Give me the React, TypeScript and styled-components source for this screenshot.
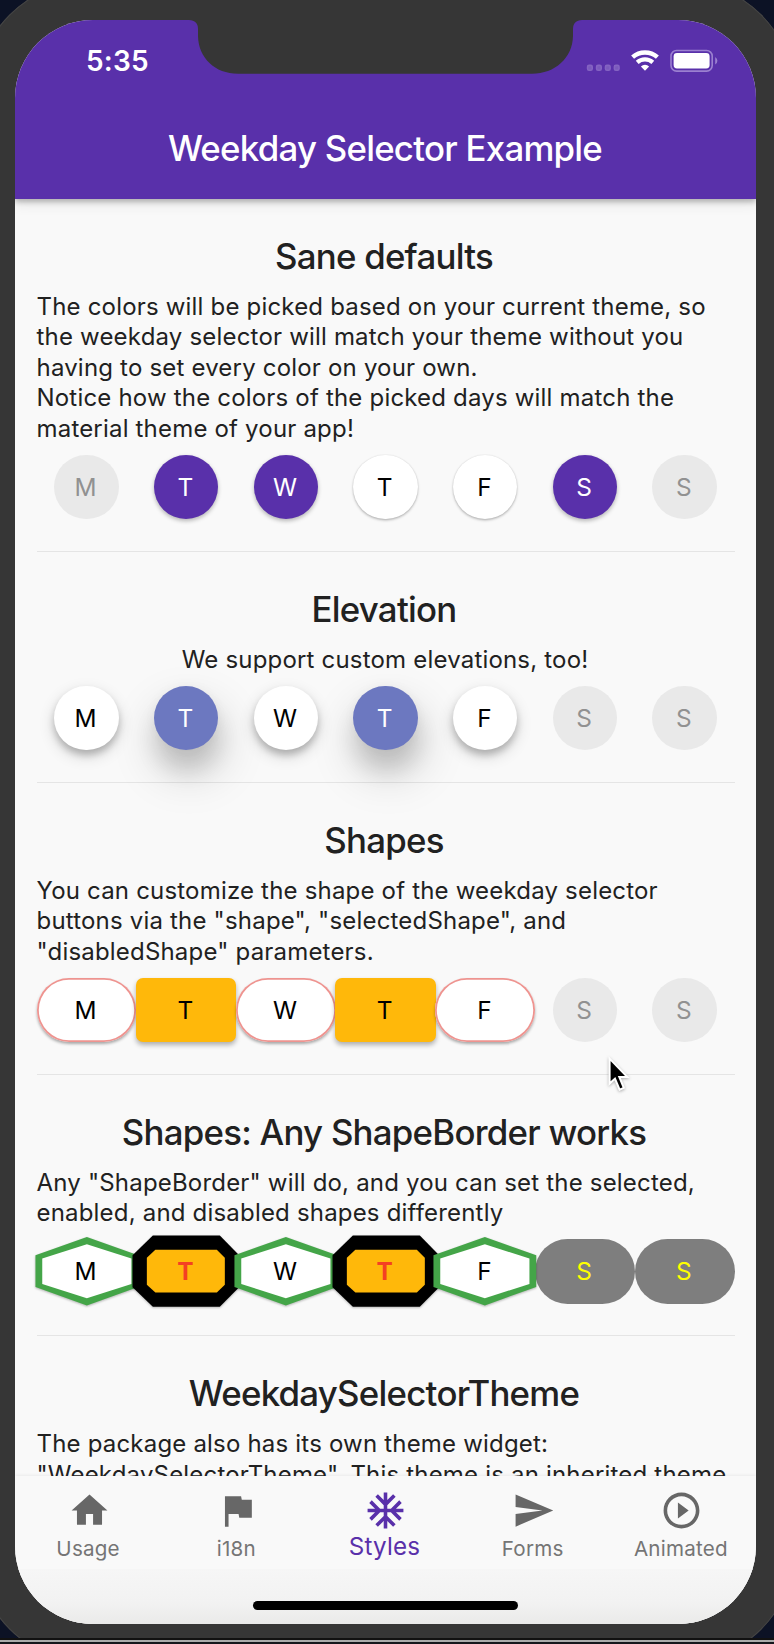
import React from "react";
import styled, { createGlobalStyle, css } from "styled-components";

const PURPLE = "#5930aa";

const GlobalStyle = createGlobalStyle`
  * { box-sizing: border-box; }
  html, body { margin: 0; padding: 0; }
  body {
    width: 774px;
    height: 1644px;
    overflow: hidden;
    background: #0c1225;
    font-family: Inter, "Liberation Sans", sans-serif;
    color: #212121;
  }
`;

const Desktop = styled.div`
  width: 774px;
  height: 1644px;
  display: flex;
  flex-direction: column;
  overflow: hidden;
`;

const Stage = styled.div`
  height: 1638px;
  flex: none;
  overflow: hidden;
`;

const WindowEdge = styled.div`
  height: 6px;
  background: #14161c;
  border-top: 2px solid #111;
  &::before {
    content: "";
    display: block;
    height: 2px;
    background: #ababab;
  }
`;

const Device = styled.div`
  position: relative;
  width: 821px;
  height: 1684px;
  margin: -20px 0 0 -25px;
  padding: 40px;
  border-radius: 118px;
  background: #363636;
  box-shadow: inset 0 0 0 1px #444;
`;

const Screen = styled.div`
  isolation: isolate;
  width: 741px;
  height: 1604px;
  border-radius: 78px;
  overflow: hidden;
  display: flex;
  flex-direction: column;
  background: #f9f9f9;
`;

const Notch = styled.svg`
  position: absolute;
  left: 214px;
  top: 39px;
`;

const AppBar = styled.header`
  position: relative;
  z-index: 2;
  flex: none;
  height: 179px;
  background: ${PURPLE};
  color: #fff;
  display: flex;
  flex-direction: column;
  box-shadow: 0 3px 5px rgba(0, 0, 0, 0.24), 0 6px 12px rgba(0, 0, 0, 0.08);
`;

const StatusBar = styled.div`
  height: 79px;
  display: flex;
  align-items: center;
  justify-content: space-between;
  padding: 2px 38.5px 0 71px;
`;

const Clock = styled.span`
  font-size: 28px;
  line-height: 34px;
  font-weight: 600;
  letter-spacing: 0.2px;
`;

const Indicators = styled.div`
  display: flex;
  align-items: center;
`;

const Title = styled.h1`
  margin: 0;
  padding-right: 1px;
  height: 100px;
  line-height: 99px;
  font-size: 34.8px;
  font-weight: 500;
  text-align: center;
  letter-spacing: -0.74px;
`;

const Content = styled.main`
  flex: 1;
  min-height: 0;
  overflow: hidden;
  padding: 0 21.5px;
`;

const Section = styled.section`
  padding: 35.6px 0 31.6px;
  border-bottom: 1px solid #e5e5e5;
`;

const Heading = styled.h2`
  margin: 0 0 15.3px;
  padding-right: 3px;
  font-size: 34.8px;
  line-height: 42px;
  font-weight: 500;
  text-align: center;
  letter-spacing: -0.74px;
  white-space: nowrap;
`;

const Copy = styled.p<{ $center?: boolean }>`
  margin: 0 0 10.6px;
  padding-right: ${(p) => (p.$center ? 1 : 0)}px;
  font-size: 24px;
  line-height: 30.5px;
  letter-spacing: 0.19px;
  white-space: pre;
  text-align: ${(p) => (p.$center ? "center" : "left")};
`;

const Week = styled.div`
  display: grid;
  grid-template-columns: repeat(7, minmax(0, 1fr));
  height: 64.4px;
`;

const Cell = styled.div`
  display: grid;
  grid-template: 64.4px / minmax(0, 1fr);
  place-items: center;
  & > * { grid-area: 1 / 1; }
`;

type Look =
  | "disabled" | "plain" | "selected" | "raised" | "lifted"
  | "pill" | "block" | "hexagon" | "octagon" | "muted";

const looks: Record<string, ReturnType<typeof css>> = {
  disabled: css`background: #e9e9e9; color: #919191;`,
  plain: css`background: #fff; color: #000; box-shadow: 0 1.5px 2.5px rgba(0,0,0,.25), 0 0 1.5px rgba(0,0,0,.12);`,
  selected: css`background: ${PURPLE}; color: #fff; box-shadow: 0 2px 4px rgba(0,0,0,.28);`,
  raised: css`background: #fff; color: #000; box-shadow: 0 5px 7px rgba(0,0,0,.2), 0 6px 16px rgba(0,0,0,.16);`,
  lifted: css`background: #6c78c0; color: #fff; box-shadow: 1px 20px 22px rgba(0,0,0,.12), 3px 22px 46px 2px rgba(0,0,0,.18), 0 0 12px rgba(0,0,0,.04);`,
  pill: css`width: 100%; background: #fff; color: #000; box-shadow: inset 0 0 0 1.8px #ee9490, 0 2px 3px rgba(0,0,0,.32);`,
  block: css`width: 100.4px; border-radius: 7px; background: #ffb80a; color: #000; box-shadow: 0 3px 5px rgba(0,0,0,.3);`,
  muted: css`width: 100%; background: #7e7e7e; color: #ffff00;`,
};

const DayButton = styled.div<{ $look: Look }>`
  width: 64.4px;
  height: 64.4px;
  border-radius: 33px;
  display: flex;
  align-items: center;
  justify-content: center;
  ${(p) => looks[p.$look]}
`;

const Letter = styled.span<{ $tone?: string; $bold?: boolean }>`
  position: relative;
  font-size: 24.4px;
  line-height: 30px;
  margin: 0 1.5px 1px 0;
  color: ${(p) => p.$tone ?? "inherit"};
  font-weight: ${(p) => (p.$bold ? 700 : 400)};
`;

const Shape = styled.svg`
  overflow: visible;
  filter: drop-shadow(0 1.5px 1.2px rgba(0, 0, 0, 0.28));
`;

const NavBar = styled.nav`
  position: relative;
  z-index: 1;
  flex: none;
  height: 148.5px;
  background: #f9f9f9;
  box-shadow: 0 -1px 3px rgba(0, 0, 0, 0.06);
`;

const Tabs = styled.div`
  display: grid;
  grid-template-columns: repeat(5, 1fr);
  height: 93.5px;
`;

const Tab = styled.div<{ $active?: boolean }>`
  display: flex;
  flex-direction: column;
  align-items: center;
  padding-top: 13.8px;
  color: ${(p) => (p.$active ? PURPLE : "#676767")};
  svg { flex: none; }
`;

const TabLabel = styled.span<{ $active?: boolean }>`
  height: 30px;
  margin-right: 2px;
  line-height: ${(p) => (p.$active ? 29 : 33)}px;
  font-size: ${(p) => (p.$active ? 24.2 : 20.6)}px;
  letter-spacing: ${(p) => (p.$active ? 0.2 : 0.22)}px;
  color: ${(p) => (p.$active ? PURPLE : "#757575")};
`;

const HomeArea = styled.div`
  height: 55px;
  display: flex;
  justify-content: center;
  padding-top: 31.5px;
  background: linear-gradient(#f6f6f6, #f2f2f2 60%, #eaeae9);
`;

const HomeIndicator = styled.div`
  width: 265px;
  height: 9px;
  border-radius: 5px;
  background: #000;
`;

const Pointer = styled.svg`
  position: absolute;
  left: 631px;
  top: 1075px;
  filter: drop-shadow(0 1.5px 1.5px rgba(0, 0, 0, 0.3));
`;

function Day({ look, letter }: { look: Look; letter: string }) {
  if (look === "hexagon") {
    return (
      <Cell>
        <Shape width="99.7" height="64.4" viewBox="-49.85 -32.2 99.7 64.4">
          <path d="M0-34.300 51.400-15.900V15.700L0 34.200-51.400 15.700V-15.900Z" fill="#44a548" />
          <path d="M0-27 44.600-12.600V12.800L0 27-44.600 12.800V-12.600Z" fill="#fff" />
        </Shape>
        <Letter $tone="#000">{letter}</Letter>
      </Cell>
    );
  }
  if (look === "octagon") {
    return (
      <Cell>
        <Shape width="99.7" height="64.4" viewBox="-49.85 -32.2 99.7 64.4">
          <path d="M-33-35.600H34L53.300-16V16L34 35.600H-33L-53.300 16V-16Z" fill="#000" />
          <path d="M-30.500-21.400H31L39-13.500V13.500L31 21.400H-30.500L-39 13.500V-13.500Z" fill="#ffb80a" />
        </Shape>
        <Letter $tone="#f44023" $bold>{letter}</Letter>
      </Cell>
    );
  }
  return (
    <Cell>
      <DayButton $look={look}><Letter>{letter}</Letter></DayButton>
    </Cell>
  );
}

function WeekdayRow({ days }: { days: Look[] }) {
  return (
    <Week>
      {days.map((look, i) => <Day key={i} look={look} letter={"MTWTFSS"[i]} />)}
    </Week>
  );
}

const sections: { title: string; lines: string[]; center?: boolean; days?: Look[] }[] = [
  {
    title: "Sane defaults",
    lines: [
      "The colors will be picked based on your current theme, so",
      "the weekday selector will match your theme without you",
      "having to set every color on your own.",
      "Notice how the colors of the picked days will match the",
      "material theme of your app!",
    ],
    days: ["disabled", "selected", "selected", "plain", "plain", "selected", "disabled"],
  },
  {
    title: "Elevation",
    lines: ["We support custom elevations, too!"],
    center: true,
    days: ["raised", "lifted", "raised", "lifted", "raised", "disabled", "disabled"],
  },
  {
    title: "Shapes",
    lines: [
      "You can customize the shape of the weekday selector",
      'buttons via the "shape", "selectedShape", and',
      '"disabledShape" parameters.',
    ],
    days: ["pill", "block", "pill", "block", "pill", "disabled", "disabled"],
  },
  {
    title: "Shapes: Any ShapeBorder works",
    lines: [
      'Any "ShapeBorder" will do, and you can set the selected,',
      "enabled, and disabled shapes differently",
    ],
    days: ["hexagon", "octagon", "hexagon", "octagon", "hexagon", "muted", "muted"],
  },
  {
    title: "WeekdaySelectorTheme",
    lines: [
      "The package also has its own theme widget:",
      '"WeekdaySelectorTheme". This theme is an inherited theme',
    ],
  },
];

const tabs = [
  { label: "Usage", d: "M10 20v-6h4v6h5v-8h3L12 3 2 12h3v8z" },
  { label: "i18n", d: "M14.4 6L14 4H5v17h2v-7h5.6l.4 2h7V6z" },
  {
    label: "Styles",
    active: true,
    d: "M22 11h-4.17l3.24-3.24-1.41-1.42L15 11h-2V9l4.66-4.66-1.42-1.41L13 6.17V2h-2v4.17L7.76 2.93 6.34 4.34 11 9v2H9L4.34 6.34 2.93 7.76 6.17 11H2v2h4.17l-3.24 3.24 1.41 1.42L9 13h2v2l-4.66 4.66 1.42 1.41L11 17.83V22h2v-4.17l3.24 3.24 1.42-1.41L13 15v-2h2l4.66 4.66 1.41-1.42L17.83 13H22z",
  },
  { label: "Forms", d: "M2.01 21L23 12 2.01 3 2 10l15 2-15 2z" },
  {
    label: "Animated",
    d: "M10 16.5l6-4.5-6-4.5v9zM12 2C6.48 2 2 6.48 2 12s4.48 10 10 10 10-4.48 10-10S17.52 2 12 2zm0 18c-4.41 0-8-3.59-8-8s3.59-8 8-8 8 3.59 8 8-3.59 8-8 8z",
  },
];

function StatusIcons() {
  return (
    <Indicators>
      <svg width="132" height="24" viewBox="0 0 132 24">
        <g fill="#7a5abc" stroke="#8463c2" strokeWidth="1.6">
          {[1.6, 10.6, 19.5, 28.4].map((x) => (
            <rect key={x} x={x} y="16.400" width="4.6" height="4.8" rx="1.4" />
          ))}
        </g>
        <g fill="none" stroke="#fff">
          <path d="M46.600 8.200A18.600 18.600 0 0 1 71.400 8.200" strokeWidth="4.4" />
          <path d="M51.200 13.400A11.600 11.600 0 0 1 66.800 13.400" strokeWidth="4.2" />
        </g>
        <path d="M54.900 17.400A6 6 0 0 1 63.100 17.400L59 21.800Z" fill="#fff" />
        <rect x="85" y="1.500" width="41.2" height="20.6" rx="5.6" fill="none" stroke="#9b80d0" strokeWidth="1.6" />
        <rect x="87.6" y="4.100" width="36" height="15.4" rx="3.4" fill="#fff" />
        <path d="M129.200 8.100Q131.400 9.500 131.400 11.800T129.200 15.500Z" fill="#9b80d0" />
      </svg>
    </Indicators>
  );
}

export default function App() {
  return (
    <Desktop>
      <GlobalStyle />
      <Stage>
        <Device>
          <Screen>
            <AppBar>
              <StatusBar>
                <Clock>5:35</Clock>
                <StatusIcons />
              </StatusBar>
              <Title>Weekday Selector Example</Title>
            </AppBar>
            <Content>
              {sections.map((s) => (
                <Section key={s.title}>
                  <Heading>{s.title}</Heading>
                  <Copy $center={s.center}>{s.lines.join("\n")}</Copy>
                  {s.days && <WeekdayRow days={s.days} />}
                </Section>
              ))}
            </Content>
            <NavBar>
              <Tabs>
                {tabs.map((t) => (
                  <Tab key={t.label} $active={t.active}>
                    <svg width="43" height="43" viewBox="0 0 24 24" fill="currentColor">
                      <path d={t.d} />
                    </svg>
                    <TabLabel $active={t.active}>{t.label}</TabLabel>
                  </Tab>
                ))}
              </Tabs>
              <HomeArea><HomeIndicator /></HomeArea>
            </NavBar>
          </Screen>
          <Notch width="394" height="56" viewBox="189 19 394 56">
            <path
              d="M189 19V20C195 20 198 23.500 198 29V36C198.500 58 215 73.700 238 73.700H532C555 73.700 572.500 58 573 36V29C573 23.500 576 20 582 20V19Z"
              fill="#363636"
            />
          </Notch>
          <Pointer width="28" height="40" viewBox="606 1055 28 40">
            <path
              d="M609.600 1058.600V1083.600L615 1078.600L619.600 1089.600L623.800 1087.800L619.300 1077H627.400Z"
              fill="#000"
              stroke="#fff"
              strokeWidth="2"
            />
          </Pointer>
        </Device>
      </Stage>
      <WindowEdge />
    </Desktop>
  );
}
